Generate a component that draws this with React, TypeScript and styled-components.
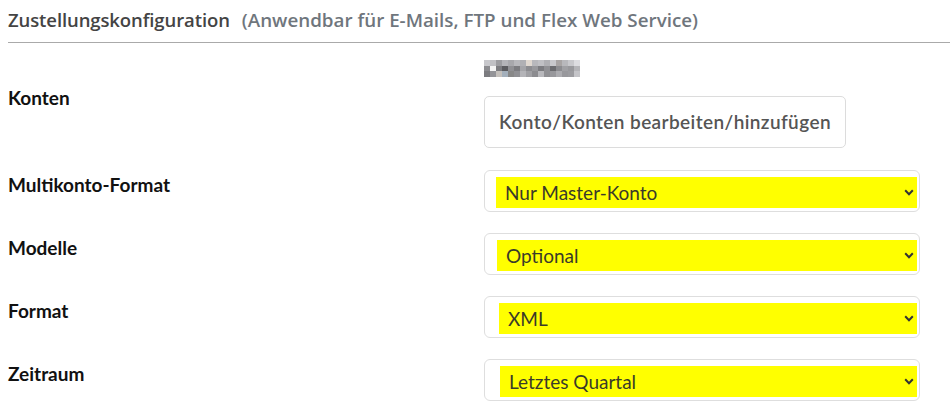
import React from "react";
import styled, { createGlobalStyle } from "styled-components";

const Global = createGlobalStyle`
  html, body { margin: 0; padding: 0; background: #fff; }
  body { font-family: "Lato", "Open Sans", sans-serif; }
`;

const Page = styled.div`
  padding: 0 1px 0 8px;
  width: 942px;
`;

const Header = styled.div`
  display: flex;
  align-items: baseline;
  gap: 12px;
  height: 43px;
  box-sizing: border-box;
  padding-top: 7px;
  border-bottom: 1px solid #aaaaaa;
`;

const Title = styled.span`
  font-family: "Open Sans", "Lato", sans-serif;
  font-size: 18.5px;
  font-weight: 600;
  letter-spacing: -0.1px;
  color: #444;
`;

const Subtitle = styled.span`
  font-family: "Open Sans", "Lato", sans-serif;
  font-size: 18.8px;
  font-weight: 600;
  color: #6f767d;
`;

const Row = styled.div<{ $pt: number; $h: number }>`
  display: flex;
  align-items: flex-start;
  height: ${(p) => p.$h}px;
  padding-top: ${(p) => p.$pt}px;
  box-sizing: border-box;
`;

const Label = styled.div<{ $top: number }>`
  width: 476px;
  flex: none;
  padding-top: ${(p) => p.$top}px;
  font-size: 19px;
  font-weight: 700;
  color: #111;
  line-height: 24px;
`;

const Control = styled.div`
  display: flex;
  flex-direction: column;
  align-items: flex-start;
`;

const Blurred = styled.div`
  display: grid;
  grid-template-columns: repeat(16, 6px);
  grid-template-rows: repeat(3, 5.5px);
  margin-bottom: 19px;
`;

const Cell = styled.div<{ $c: string }>`
  background: ${(p) => p.$c};
`;

const Button = styled.button`
  font-family: "Lato", "Open Sans", sans-serif;
  font-size: 19px;
  font-weight: 600;
  letter-spacing: 0.4px;
  color: #555;
  background: #fff;
  border: 1px solid #dcdcdc;
  border-radius: 5px;
  height: 52px;
  width: 362px;
  padding: 0;
  text-align: center;
`;

const SelectBox = styled.div`
  width: 436px;
  height: 42px;
  box-sizing: border-box;
  border: 1px solid #dedede;
  border-radius: 6px;
  padding: 6px 2px 3px 11px;
  display: flex;
`;

const SelectInner = styled.div<{ $inset: number }>`
  flex: 1;
  margin-left: ${(p) => p.$inset}px;
  background: #ffff00;
  display: flex;
  align-items: center;
  justify-content: space-between;
  padding: 0 3px 0 9px;
  font-size: 19px;
  color: #3a3a2a;
`;

const Chevron = () => (
  <svg width="10" height="7" viewBox="0 0 10 7">
    <path d="M1.2 1.3 L5 5.2 L8.8 1.3" fill="none" stroke="#333" strokeWidth="2" />
  </svg>
);

const blob = [
  "#c8c8cc,#c0c0c4,#9c9ca0,#b4b4b8,#a8a8ac,#b8b8bc,#b0b0b4,#e0d8d0,#b8b8bc,#c0c0c4,#b0b0b4,#c8c8cc,#a8a4a4,#b8b8bc,#c8c8cc,#dcdce0",
  "#8c8c90,#f4f4f4,#7c7c80,#5c5c60,#909094,#7c7c80,#a4a4a8,#8c8c90,#98989c,#7c7c80,#909094,#6c6c70,#8c8c90,#a0a0a4,#98989c,#b4b4b8",
  "#7c7c80,#949498,#c4c0bc,#a4b0bc,#888888,#909094,#b4b4b8,#a0a0a4,#8c8c90,#b8b8bc,#909094,#98989c,#acacb0,#98989c,#9c9ca0,#c4c4c8",
];

const selects = [
  { label: "Multikonto-Format", value: "Nur Master-Konto", inset: 0 },
  { label: "Modelle", value: "Optional", inset: 1 },
  { label: "Format", value: "XML", inset: 3 },
  { label: "Zeitraum", value: "Letztes Quartal", inset: 4 },
];

export default function App() {
  return (
    <>
      <Global />
      <Page>
        <Header>
          <Title>Zustellungskonfiguration</Title>
          <Subtitle>(Anwendbar für E-Mails, FTP und Flex Web Service)</Subtitle>
        </Header>
        <Row $pt={17} $h={127}>
          <Label $top={26}>Konten</Label>
          <Control>
            <Blurred>
              {blob.flatMap((r, i) =>
                r.split(",").map((c, j) => <Cell key={`${i}-${j}`} $c={c} />)
              )}
            </Blurred>
            <Button>Konto/Konten bearbeiten/hinzufügen</Button>
          </Control>
        </Row>
        {selects.map((s) => (
          <Row key={s.label} $pt={0} $h={63}>
            <Label $top={3}>{s.label}</Label>
            <Control>
              <SelectBox>
                <SelectInner $inset={s.inset}>
                  <span>{s.value}</span>
                  <Chevron />
                </SelectInner>
              </SelectBox>
            </Control>
          </Row>
        ))}
      </Page>
    </>
  );
}
